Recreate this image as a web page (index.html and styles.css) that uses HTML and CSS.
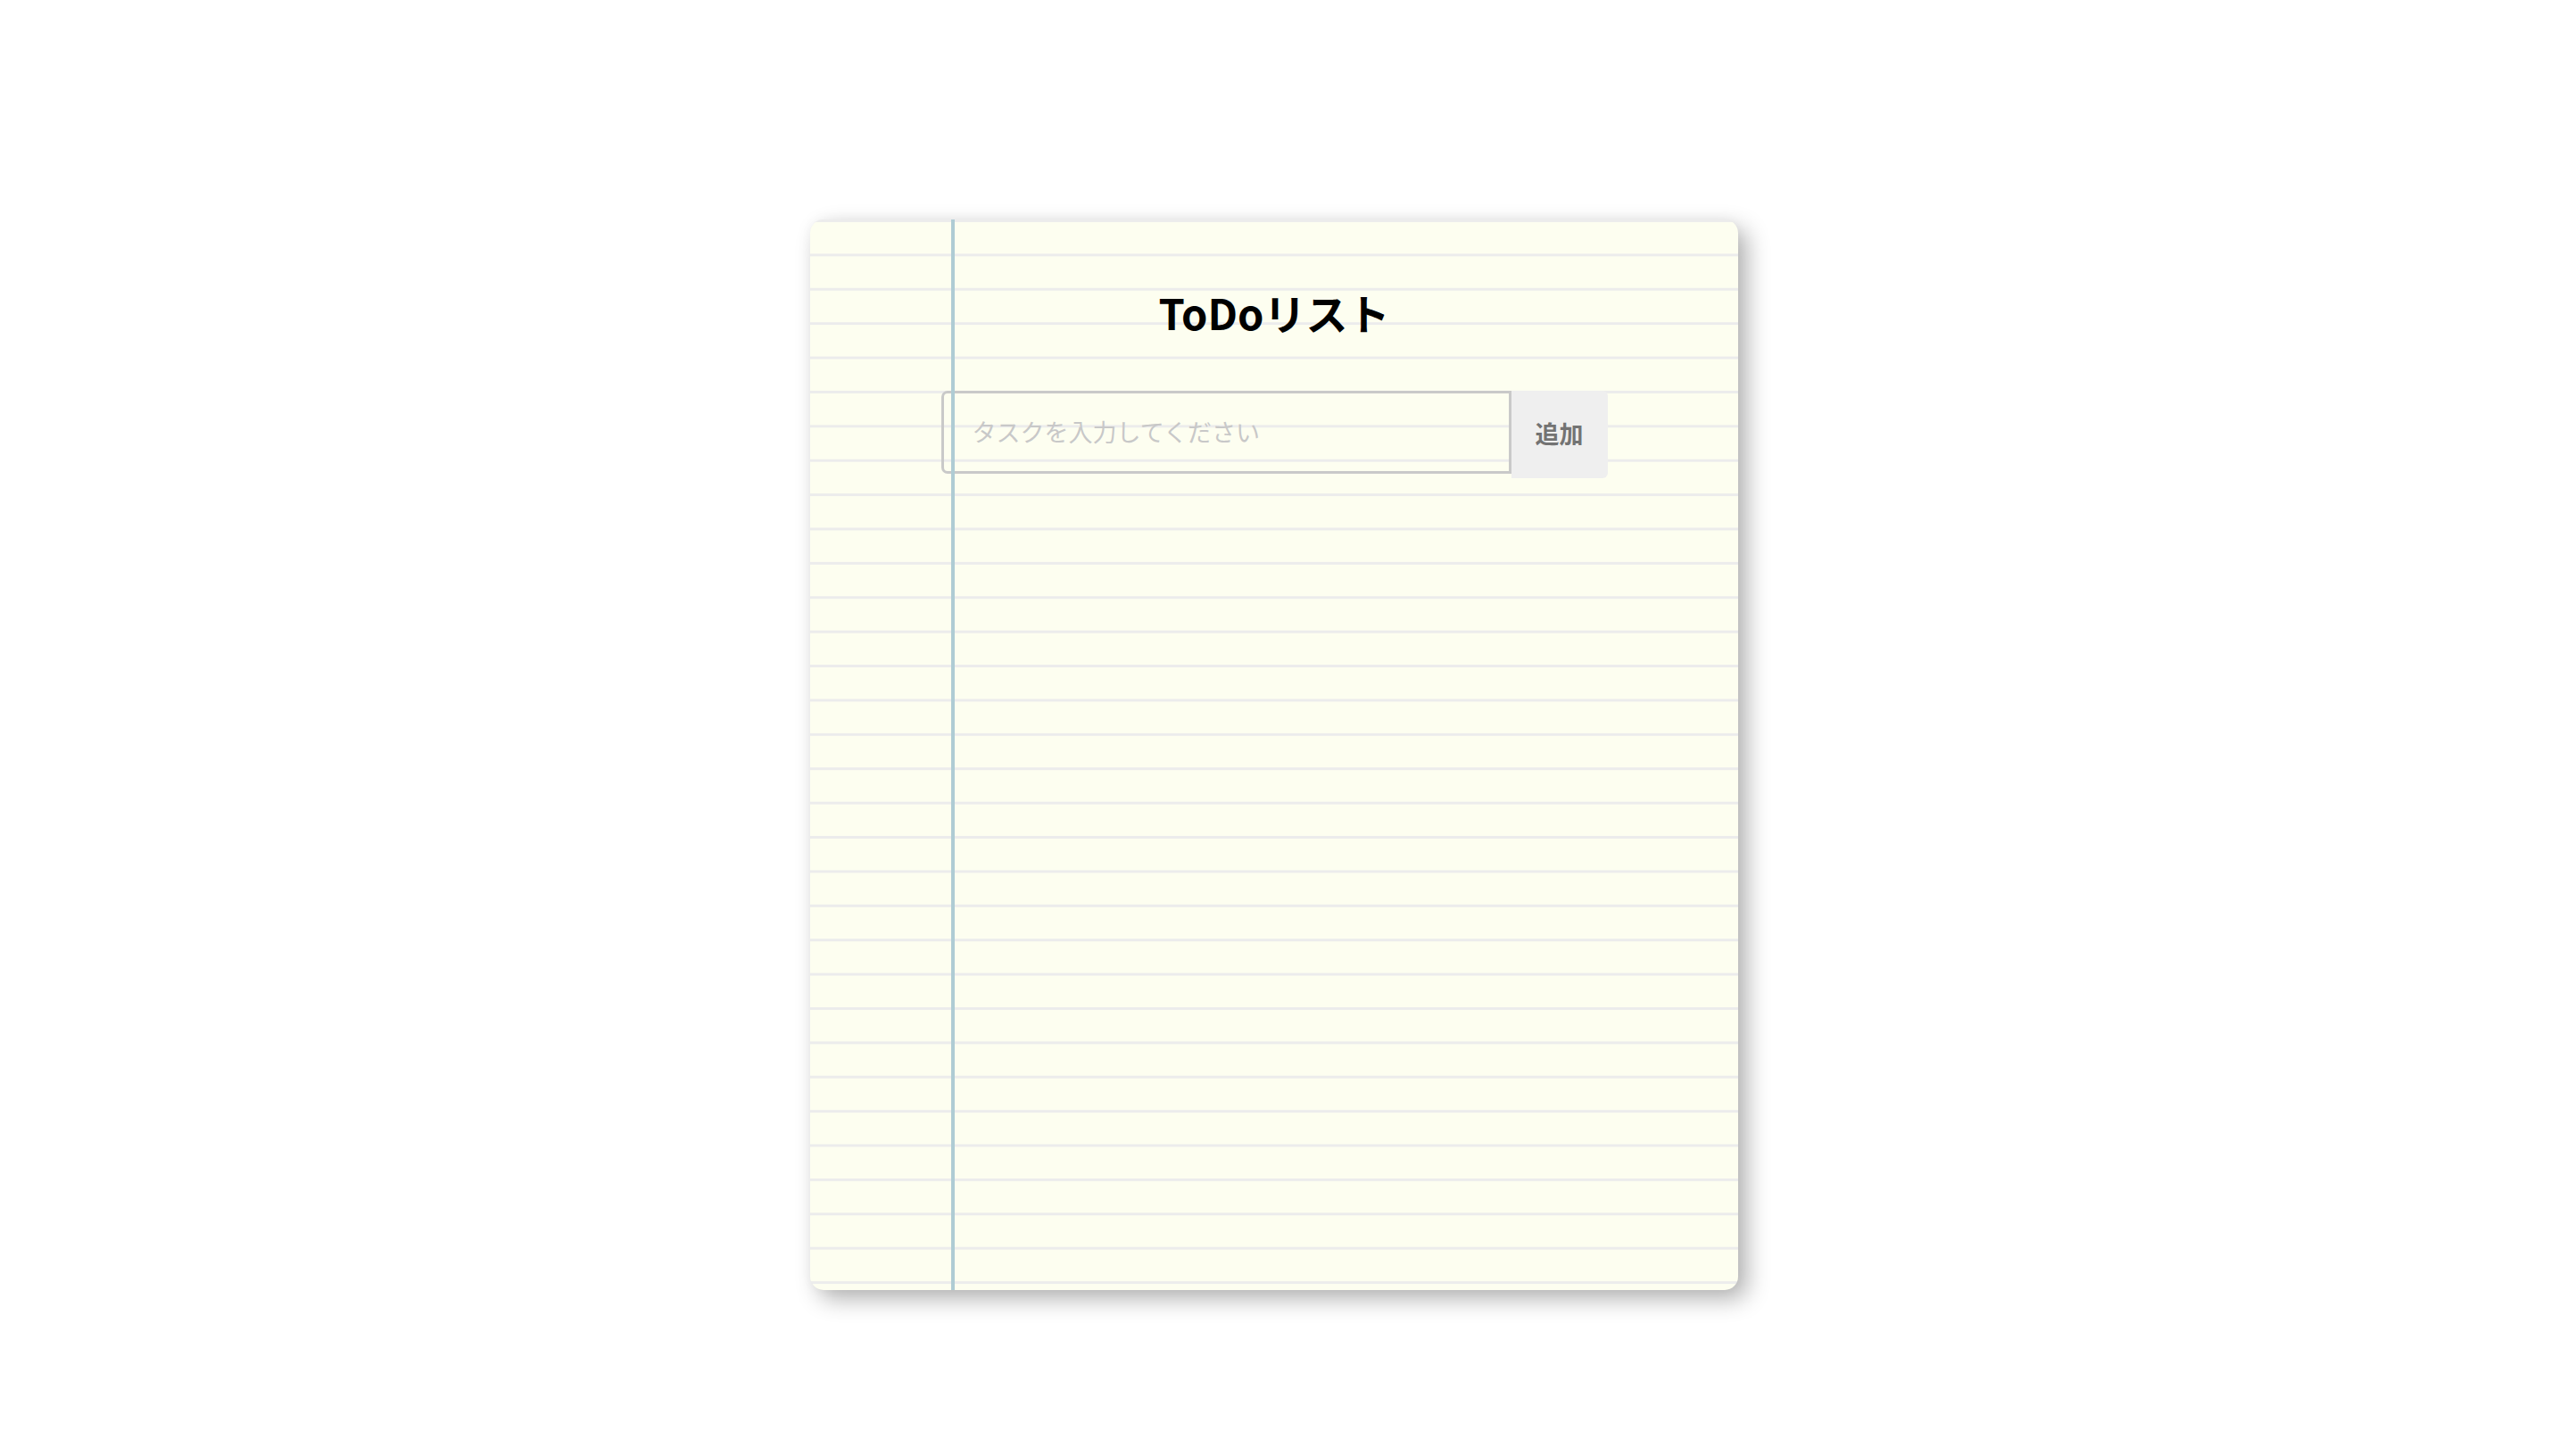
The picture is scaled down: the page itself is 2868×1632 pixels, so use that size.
FILE: index.html
```html
<!DOCTYPE html>
<html lang="ja">
<head>
<meta charset="utf-8">
<title>ToDoリスト</title>
<link rel="stylesheet" href="styles.css">
</head>
<body>
<main class="page">
  <section class="notebook">
    <div class="margin-line"></div>
    <h1 class="title">ToDoリスト</h1>
    <form class="todo-form">
      <input class="todo-input" id="task" type="text" placeholder="タスクを入力してください" autofocus>
      <button class="add-btn" type="button">追加</button>
    </form>
    <ul class="todo-list"></ul>
  </section>
</main>
<script src="app.js"></script>
</body>
</html>
```
FILE: styles.css
```css
html, body {
  margin: 0;
  padding: 0;
  background: #ffffff;
}

.page {
  display: flex;
  justify-content: center;
  min-height: 1632px;
  box-sizing: border-box;
  padding-top: 246px;
  padding-right: 12px;
  padding-bottom: 120px;
}

.notebook {
  position: relative;
  width: 1040px;
  height: 1200px;
  box-sizing: border-box;
  border-radius: 15px;
  background-color: #fdfef0;
  background-image: linear-gradient(#ececec 0, #ececec 2.7px, transparent 2.7px);
  background-size: 100% 38.4px;
  background-position: 0 0;
  box-shadow: 10px 10px 26px rgba(0, 0, 0, 0.3), 0 0 14px rgba(0, 0, 0, 0.03);
  overflow: hidden;
  font-family: "Noto Sans CJK JP", sans-serif;
}

.margin-line {
  position: absolute;
  left: 158px;
  top: 0;
  bottom: 0;
  width: 4px;
  background: #afccd4;
}

.title {
  margin: 69px 0 0;
  text-align: center;
  font-family: "Noto Sans CJK JP", sans-serif;
  font-size: 47px;
  font-weight: 700;
  line-height: 70px;
  color: #000;
}

.todo-form {
  display: flex;
  align-items: flex-start;
  width: 747px;
  margin: 53px auto 0;
}

.todo-input {
  width: 639px;
  height: 93px;
  box-sizing: border-box;
  margin: 0;
  padding: 2px 0 0 32px;
  border: 3px solid #c9c9c9;
  border-radius: 7px 0 0 7px;
  background: transparent;
  font-family: Inter, "Noto Sans CJK JP", sans-serif;
  font-size: 27px;
  color: #333;
  caret-color: #000;
  outline: none;
}

.todo-input::placeholder {
  color: #c8c8c8;
}

.add-btn {
  width: 108px;
  height: 98px;
  margin: 0;
  padding: 0 0 4px;
  border: none;
  border-radius: 0 6px 6px 0;
  background: #efefef;
  color: #737373;
  font-family: "Noto Sans CJK JP", sans-serif;
  font-size: 27px;
  font-weight: 700;
  line-height: 1;
  cursor: pointer;
}

.todo-list {
  list-style: none;
  margin: 0;
  padding: 0;
}
```
FILE: app.js
```js
document.getElementById('task').focus();
```
